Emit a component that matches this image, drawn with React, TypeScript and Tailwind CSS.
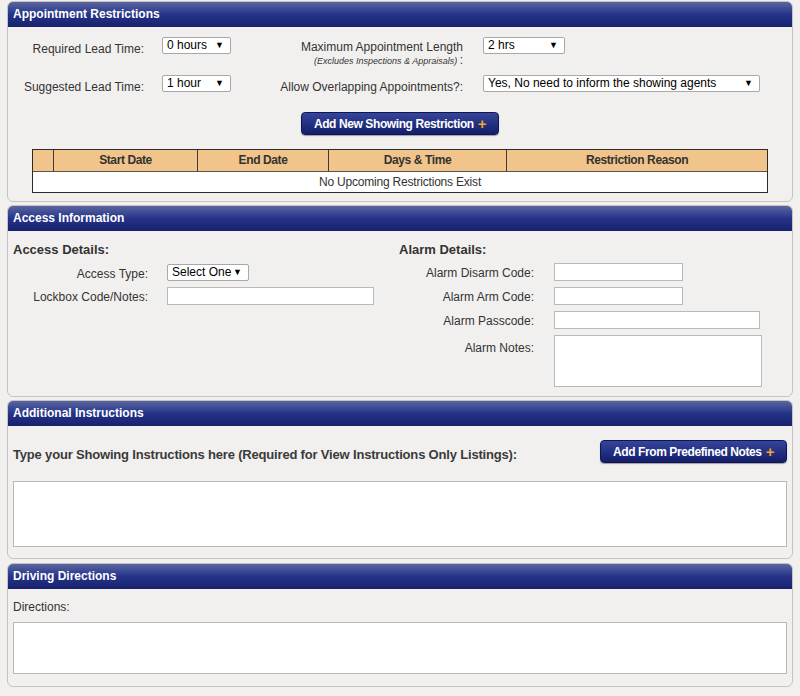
import React from "react";

const font = { fontFamily: '"Liberation Sans", Arial, sans-serif' };

function Panel({ title, children, className = "" }: { title: string; children: React.ReactNode; className?: string }) {
  return (
    <div className={"mx-[7px] rounded-[6px] border border-[#c4c4c4] bg-[#f2f0ef] " + className}>
      <div className="h-[25px] rounded-t-[5px] bg-gradient-to-b from-[#5b659f] via-[#26338a] to-[#17216c] px-[5px] text-[12px] font-bold leading-[25px] text-white">
        {title}
      </div>
      {children}
    </div>
  );
}

function FakeSelect({ text, w }: { text: string; w: string }) {
  return (
    <div className={"flex h-[17px] items-center justify-between rounded-[2px] border border-[#a8a8a8] bg-white pl-[4px] pr-[6px] text-[12px] leading-[15px] text-black " + w}>
      <span>{text}</span>
      <span className="text-[9px]">▼</span>
    </div>
  );
}

function Input({ w, h = "h-[18px]" }: { w: string; h?: string }) {
  return <div className={"border border-[#b9b9b9] bg-white " + w + " " + h} />;
}

function Btn({ text }: { text: string }) {
  return (
    <div className="flex h-[23px] items-center rounded-[4px] border border-[#0e1655] bg-gradient-to-b from-[#36459a] to-[#141d6b] px-[12px] text-[12px] font-bold tracking-[-0.4px] text-white shadow-[0_1px_1px_rgba(0,0,0,0.35)]">
      {text}
      <span className="ml-[4px] text-[15px] font-bold leading-none text-[#f4a52a]">+</span>
    </div>
  );
}

export default function App() {
  return (
    <div style={font} className="h-[696px] w-[800px] overflow-hidden bg-[#f1f0ef] pt-[1px] text-[12px] text-[#333]">
      <Panel title="Appointment Restrictions">
        <div className="pt-[10px] pb-[8px]">
          <div className="flex h-[38px] items-start">
            <div className="w-[136px] pt-[3px] text-right">Required Lead Time:</div>
            <div className="ml-[18px]"><FakeSelect text="0 hours" w="w-[69px]" /></div>
            <div className="w-[232px] pt-[3px] text-right leading-[14px]">
              <div>Maximum Appointment Length</div>
              <div className="mt-[1px] text-[9px] italic leading-[10px]">(Excludes Inspections &amp; Appraisals) <span className="text-[12px] not-italic">:</span></div>
            </div>
            <div className="ml-[20px]"><FakeSelect text="2 hrs" w="w-[82px]" /></div>
          </div>
          <div className="flex h-[17px] items-start">
            <div className="w-[136px] pt-[3px] text-right">Suggested Lead Time:</div>
            <div className="ml-[18px]"><FakeSelect text="1 hour" w="w-[69px]" /></div>
            <div className="w-[232px] pt-[3px] text-right">Allow Overlapping Appointments?:</div>
            <div className="ml-[20px]"><FakeSelect text="Yes, No need to inform the showing agents" w="w-[277px]" /></div>
          </div>
          <div className="mt-[20px] flex justify-center">
            <Btn text="Add New Showing Restriction" />
          </div>
          <div className="mx-[24px] mt-[14px] border border-[#2b2b2b] bg-white">
            <div className="flex h-[21px] bg-[#f0c48a] text-[12px] font-bold tracking-[-0.4px] text-[#333] leading-[20px]">
              <div className="w-[21px] border-r border-[#3a3a3a]" />
              <div className="w-[144px] border-r border-[#3a3a3a] text-center">Start Date</div>
              <div className="w-[131px] border-r border-[#3a3a3a] text-center">End Date</div>
              <div className="w-[178px] border-r border-[#3a3a3a] text-center">Days &amp; Time</div>
              <div className="flex-1 text-center">Restriction Reason</div>
            </div>
            <div className="h-[21px] border-t border-[#555] text-center leading-[20px] tracking-[-0.2px]">No Upcoming Restrictions Exist</div>
          </div>
        </div>
      </Panel>

      <Panel title="Access Information" className="mt-[3px]">
        <div className="flex pt-[11px] pb-[9px]">
          <div className="w-[391px]">
            <div className="pl-[5px] text-[13px] font-bold leading-[16px]">Access Details:</div>
            <div className="mt-[5px] flex h-[18px] items-center">
              <div className="w-[140px] pt-[3px] text-right">Access Type:</div>
              <div className="ml-[19px]"><FakeSelect text="Select One" w="w-[82px]" /></div>
            </div>
            <div className="mt-[6px] flex h-[18px] items-center">
              <div className="w-[140px] pt-[2px] text-right">Lockbox Code/Notes:</div>
              <div className="ml-[19px]"><Input w="w-[207px]" /></div>
            </div>
          </div>
          <div className="flex-1">
            <div className="text-[13px] font-bold leading-[16px]">Alarm Details:</div>
            <div className="mt-[5px] flex flex-col gap-[6px]">
              <div className="flex h-[18px] items-center">
                <div className="w-[135px] pt-[2px] text-right">Alarm Disarm Code:</div>
                <div className="ml-[20px]"><Input w="w-[129px]" /></div>
              </div>
              <div className="flex h-[18px] items-center">
                <div className="w-[135px] pt-[2px] text-right">Alarm Arm Code:</div>
                <div className="ml-[20px]"><Input w="w-[129px]" /></div>
              </div>
              <div className="flex h-[18px] items-center">
                <div className="w-[135px] pt-[2px] text-right">Alarm Passcode:</div>
                <div className="ml-[20px]"><Input w="w-[206px]" /></div>
              </div>
              <div className="flex items-start">
                <div className="w-[135px] pt-[4px] text-right">Alarm Notes:</div>
                <div className="ml-[20px]"><Input w="w-[208px]" h="h-[52px]" /></div>
              </div>
            </div>
          </div>
        </div>
      </Panel>

      <Panel title="Additional Instructions" className="mt-[3px]">
        <div className="px-[5px] pt-[14px] pb-[11px]">
          <div className="flex items-end justify-between">
            <div className="pb-[0px] text-[13px] font-bold leading-[16px] tracking-[-0.18px] text-[#3a3a3a]">
              Type your Showing Instructions here (Required for View Instructions Only Listings):
            </div>
            <Btn text="Add From Predefined Notes" />
          </div>
          <div className="mt-[18px]"><Input w="w-full" h="h-[66px]" /></div>
        </div>
      </Panel>

      <Panel title="Driving Directions" className="mt-[4px]">
        <div className="px-[5px] pt-[11px] pb-[12px]">
          <div className="leading-[14px]">Directions:</div>
          <div className="mt-[8px]"><Input w="w-full" h="h-[52px]" /></div>
        </div>
      </Panel>
    </div>
  );
}
